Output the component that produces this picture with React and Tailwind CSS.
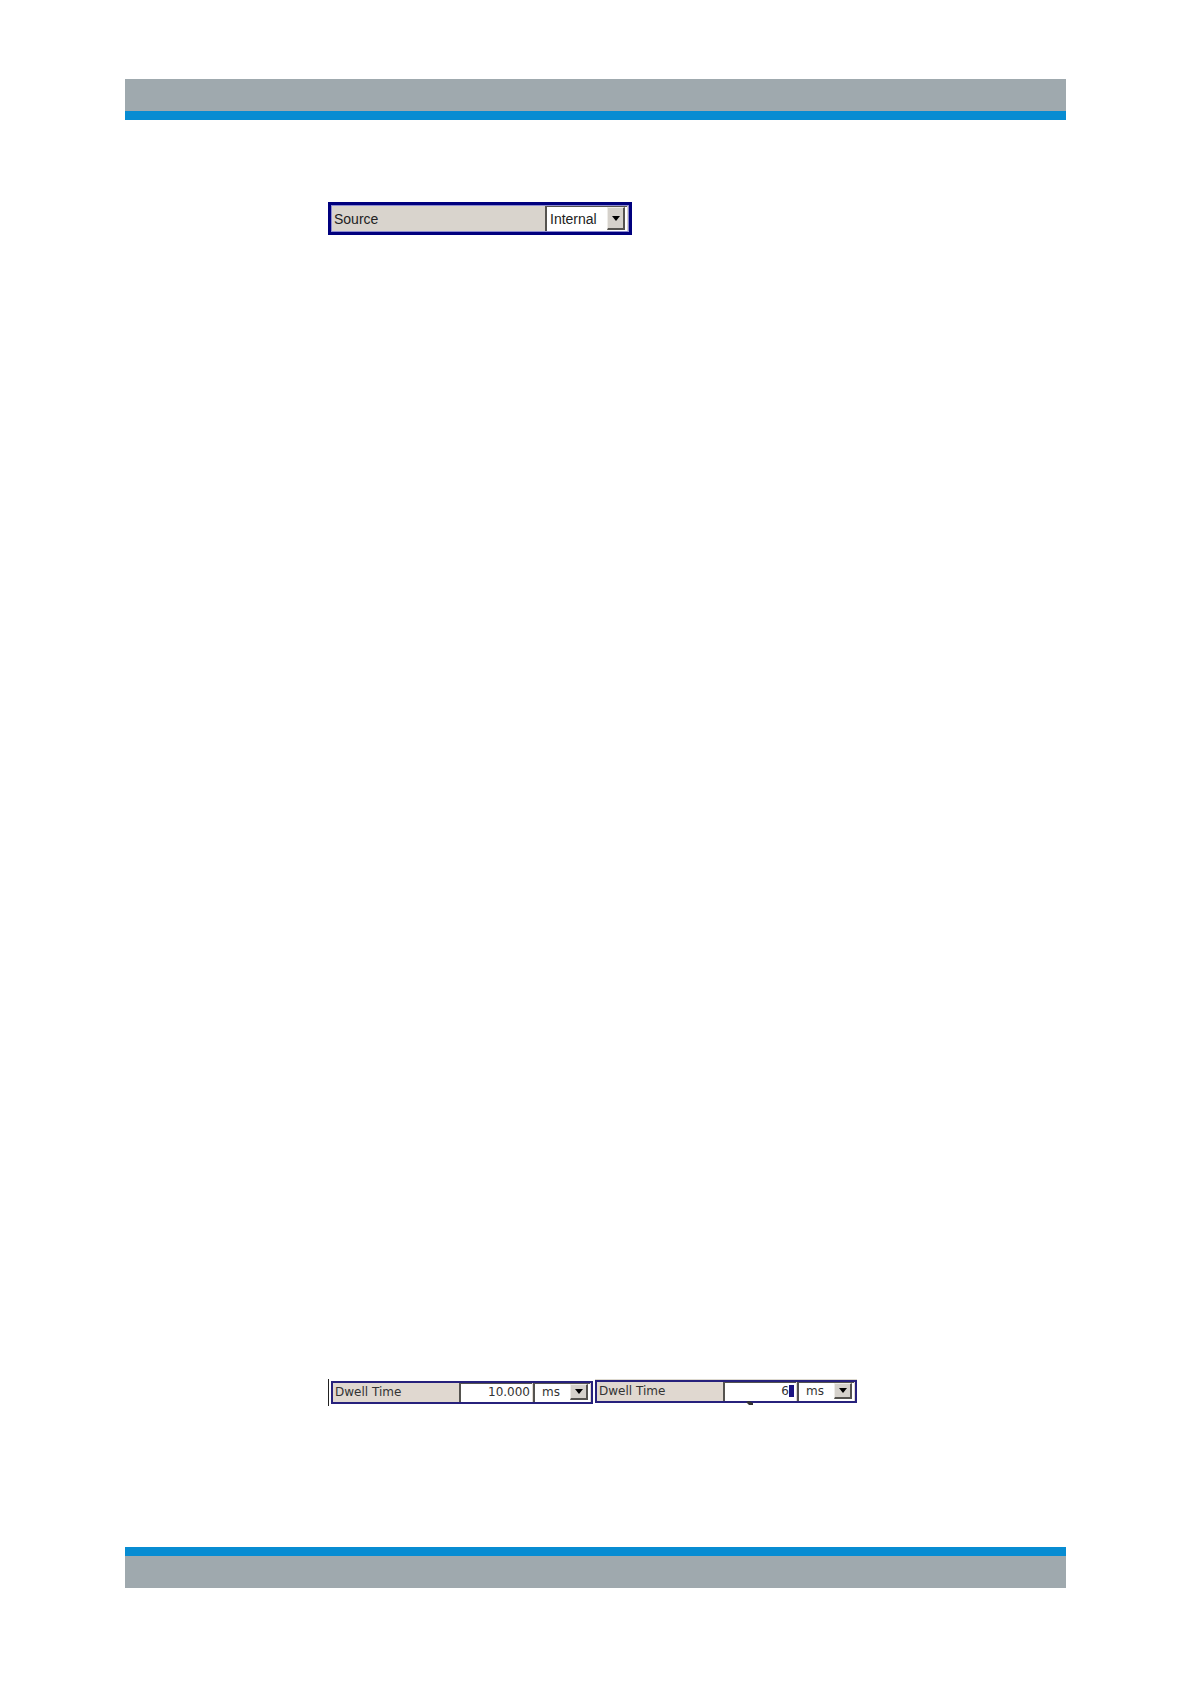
/*
 * App.jsx
 * Manual page with the instrument's parameter fields between two rules.
 */
import { useState } from 'react';

// Sunken drop-down with a raised arrow button on its right end
function UnitSelect({ id, label, options, className, selectClassName, arrowClassName }) {
    return (
        <div className={`relative shrink-0 bg-white border-t border-l-2 border-[#55534f] ${className}`}>
            <select id={id} aria-label={label} className={`block w-full h-full appearance-none bg-transparent outline-none ${selectClassName}`}>
                {options.map((option) => (
                    <option key={option}>{option}</option>
                ))}
            </select>
            <span className={`pointer-events-none absolute top-0 right-0.5 flex items-center justify-center bg-[#d5d1cb] border-t border-l border-t-[#eeece8] border-l-[#eeece8] border-r-2 border-b-2 border-r-[#55534f] border-b-[#55534f] ${arrowClassName}`}>
                <svg viewBox="0 0 8 5" className="w-2 h-[5px]">
                    <path d="M0 0h8L4 5z" fill="#000" />
                </svg>
            </span>
        </div>
    );
}

function SourceField() {
    return (
        <div className="flex w-[304px] h-[33px] border-3 border-[#00007e] bg-[#d9d4cd] font-['Liberation_Sans',sans-serif] text-sm text-[#222]">
            <div className="flex flex-1 border border-[#8d8bd0] pr-px">
                <label htmlFor="source" className="flex-1 self-center pl-0.5">Source</label>
                <UnitSelect
                    id="source"
                    options={['Internal', 'External']}
                    className="w-[82px]"
                    selectClassName="pl-[3px] pb-px"
                    arrowClassName="w-[18px] h-[23px]"
                />
            </div>
        </div>
    );
}

function DwellField({ id, initial, editing }) {
    const [value, setValue] = useState(initial);

    return (
        <div className="relative flex w-[262px] h-[23px] border-2 border-[#27217c] bg-[#e0d8d0] font-['DejaVu_Sans',sans-serif] text-xs leading-4 text-[#333]">
            <label htmlFor={id} className="flex-1 self-center pl-0.5 pb-0.5">Dwell Time</label>
            <div className="flex w-[73px] items-center bg-white border-t border-l-2 border-[#55534f] pr-0.5 pb-0.5">
                <input
                    id={id}
                    value={value}
                    onChange={(e) => setValue(e.target.value)}
                    className="w-full min-w-0 bg-transparent text-right outline-none"
                />
                {editing && <span className="w-[5px] h-3 shrink-0 bg-[#1c1482]" />}
            </div>
            <UnitSelect
                id={`${id}-unit`}
                label="Dwell time unit"
                options={['ms', 's']}
                className="w-[57px] mx-px"
                selectClassName="pl-[7px] pb-0.5"
                arrowClassName="w-[18px] h-4"
            />
            {/* Tip of the mouse pointer below the field being edited */}
            {editing && (
                <svg viewBox="0 0 7 5" className="absolute left-[149px] top-[18px] w-[7px] h-[5px]">
                    <path d="M0 2l3-1 4 2v2H3z" fill="#333" />
                </svg>
            )}
        </div>
    );
}

export default function App() {
    return (
        <div className="min-h-screen flex flex-col bg-white px-[125px] pt-[79px] pb-24">
            <header className="h-[41px] bg-[#9fa9ae] border-b-9 border-[#078cd2]" />

            <main className="flex-1 flex flex-col justify-between pl-[203px] pt-[82px] pb-[141px]">
                <SourceField />

                <div className="flex items-start">
                    <div className="w-px h-[27px] bg-[#222]" />
                    <div className="pl-0.5 pt-0.5">
                        <DwellField id="dwell" initial="10.000" />
                    </div>
                    <div className="ml-0.5 border-t border-[#ddd9cf]">
                        <DwellField id="dwell-edit" initial="6" editing />
                    </div>
                </div>
            </main>

            <footer className="h-[41px] bg-[#9fa9ae] border-t-9 border-[#078cd2]" />
        </div>
    );
}
